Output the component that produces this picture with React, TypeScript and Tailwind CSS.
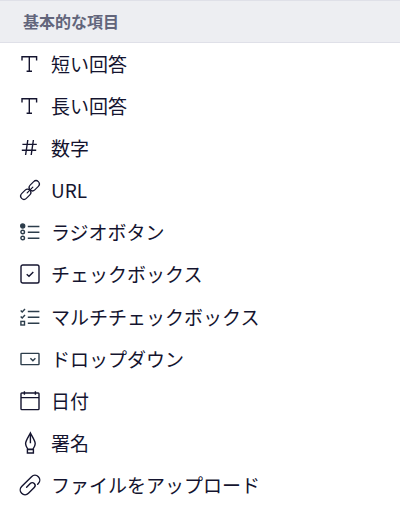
import type { ReactNode } from "react";

type IconProps = {
  children: ReactNode;
  muted?: boolean;
};

const Icon = ({ children, muted }: IconProps) => (
  <svg
    viewBox="0 0 20 20"
    fill="none"
    stroke="currentColor"
    strokeWidth={1.4}
    aria-hidden="true"
    className={`size-5 shrink-0 overflow-visible ${muted ? "text-[#2c3d4b]" : "text-[#14142f]"}`}
  >
    {children}
  </svg>
);

const TextIcon = () => (
  <Icon>
    <path d="M2 6.5V2.7h14.6v3.8M9.3 2.7v14.6M6.6 17.3h5.4" />
  </Icon>
);

const NumberIcon = () => (
  <Icon>
    <path d="M7.8 2 5.6 17M13.4 2l-2.2 15M2.4 6.4h14.4M1.8 12.3h14.4" />
  </Icon>
);

const LinkIcon = () => (
  <Icon>
    <g transform="translate(10 10) rotate(-45)" strokeLinecap="round" strokeWidth="1.2">
      <rect x="0.2" y="-3.3" width="11.6" height="6.6" rx="3.3" />
      <rect x="-11.8" y="-3.3" width="11.6" height="6.6" rx="3.3" />
      <path d="M-4 0H4" />
    </g>
  </Icon>
);

const RadioIcon = () => (
  <Icon muted>
    <circle cx="2.7" cy="4" r="2" fill="currentColor" />
    <circle cx="2.7" cy="10" r="1.8" />
    <circle cx="2.7" cy="16" r="1.8" />
    <path d="M7.8 4.5h11.6M7.8 10.3h11.6M7.8 16.3h11.6" />
  </Icon>
);

const CheckboxIcon = () => (
  <Icon>
    <rect x="1" y="1" width="18" height="18" rx="1.8" />
    <path d="m6.7 10.3 2.3 2 4.3-4.3" />
  </Icon>
);

const MultiCheckIcon = () => (
  <Icon muted>
    <path d="m0.7 3.4 1.5 1.6 2.8-3M0.7 9.4l1.5 1.6 2.8-3" />
    <rect x="0.9" y="14.4" width="3.6" height="3.6" />
    <path d="M7.8 4.5h11.6M7.8 10.3h11.6M7.8 16.3h11.6" />
  </Icon>
);

const DropdownIcon = () => (
  <Icon muted>
    <rect x="1" y="4.4" width="18" height="11.2" rx="0.6" />
    <path d="m10.4 9.2 2.5 2.5 2.5-2.5" />
  </Icon>
);

const CalendarIcon = () => (
  <Icon>
    <rect x="1" y="2" width="18" height="16.6" rx="0.8" />
    <path d="M4.4 0.3v3.4M15.4 0.3v3.4M1 6.6h18" />
  </Icon>
);

const PenIcon = () => (
  <Icon>
    <path d="M10.4 0C9 3.2 5.6 7.4 5.6 10.8c0 1.8 1 3.6 2.2 5.4h5.2c1.2-1.8 2.2-3.6 2.2-5.4C15.2 7.4 11.8 3.2 10.4 0Z" />
    <path d="M10.4 1.5v8.8M7.4 16.6h6v3.4h-6z" />
  </Icon>
);

const ClipIcon = () => (
  <Icon>
    <g transform="translate(10 10) rotate(-45)" strokeLinecap="round">
      <path d="M6 4.8H7A4.8 4.8 0 0 0 7 -4.8H-7A4.8 4.8 0 0 0 -7 4.8H1.2A2.8 2.8 0 0 0 1.2 -0.8H-4" />
    </g>
  </Icon>
);

const fields = [
  { label: "短い回答", icon: <TextIcon /> },
  { label: "長い回答", icon: <TextIcon /> },
  { label: "数字", icon: <NumberIcon /> },
  { label: "URL", icon: <LinkIcon /> },
  { label: "ラジオボタン", icon: <RadioIcon /> },
  { label: "チェックボックス", icon: <CheckboxIcon /> },
  { label: "マルチチェックボックス", icon: <MultiCheckIcon /> },
  { label: "ドロップダウン", icon: <DropdownIcon /> },
  { label: "日付", icon: <CalendarIcon /> },
  { label: "署名", icon: <PenIcon /> },
  { label: "ファイルをアップロード", icon: <ClipIcon /> },
];

export default function App() {
  return (
    <section className="flex min-h-screen flex-col bg-white font-['Noto_Sans_CJK_JP',sans-serif] text-[#14142f]">
      <h2 className="border-y border-[#dfe0e8] bg-[#edeef2] px-[23px] py-2 text-[16px] leading-[25px] font-bold text-[#62657b]">
        基本的な項目
      </h2>
      <ul className="grid flex-1 auto-rows-fr">
        {fields.map((f) => (
          <li key={f.label} className="flex">
            <button type="button" className="flex w-full items-center gap-[11px] px-5 py-1 text-left text-[19px] leading-7">
              {f.icon}
              <span>{f.label}</span>
            </button>
          </li>
        ))}
      </ul>
    </section>
  );
}
